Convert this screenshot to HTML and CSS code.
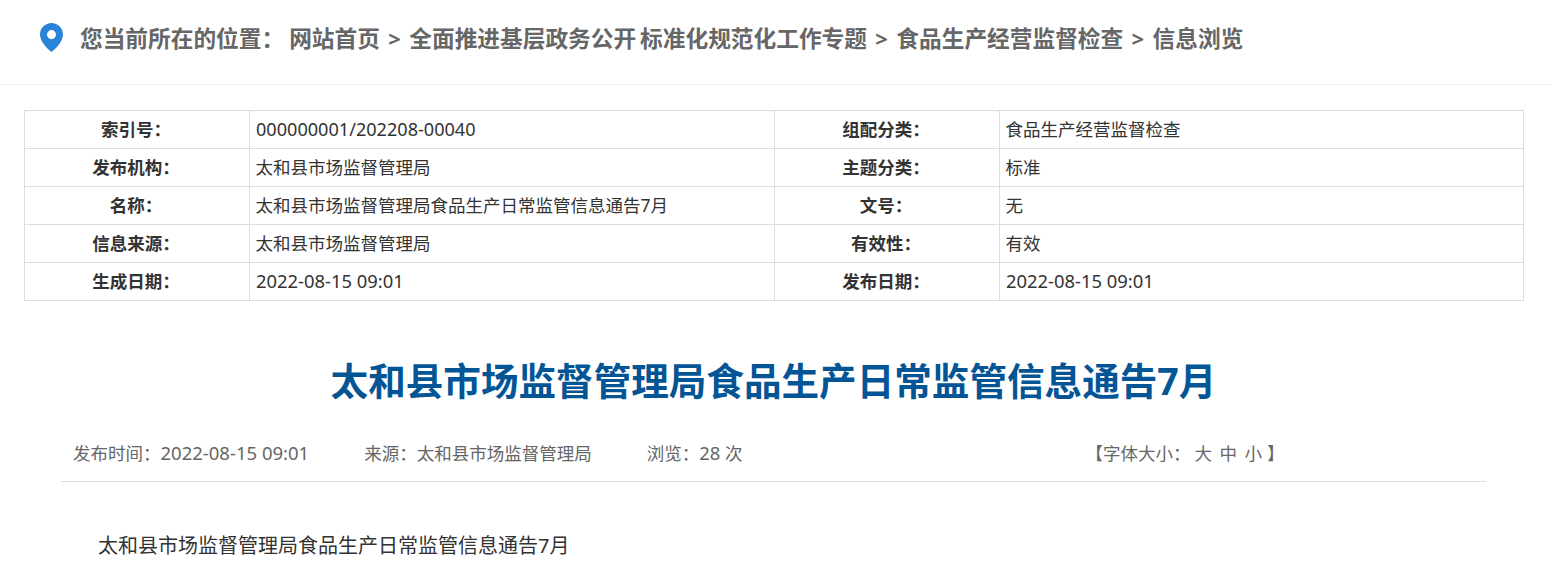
FILE: index.html
```html
<!DOCTYPE html>
<html lang="zh-CN">
<head>
<meta charset="utf-8">
<title>信息浏览</title>
<link rel="stylesheet" href="styles.css">
</head>
<body>
<header class="crumbs">
  <svg class="pin" viewBox="0 0 24 30" width="23" height="29" preserveAspectRatio="none" aria-hidden="true"><path fill="#2a83d6" fill-rule="evenodd" d="M12 0C5.4 0 0 5.3 0 11.900c0 3.300 1.600 6.500 3.500 9.400C5.600 24.400 8.600 27.400 12 30c3.400-2.600 6.400-5.600 8.500-8.700 1.900-2.900 3.500-6.100 3.500-9.400C24 5.300 18.600 0 12 0zm0 7.300a4.700 4.700 0 1 1 0 9.400 4.700 4.700 0 0 1 0-9.400z"/></svg>
  <span class="crumb-label">您当前所在的位置：</span>
  <a class="crumb">网站首页</a><span class="sep">&gt;</span>
  <a class="crumb">全面推进基层政务公开 标准化规范化工作专题</a><span class="sep">&gt;</span>
  <a class="crumb">食品生产经营监督检查</a><span class="sep">&gt;</span>
  <a class="crumb">信息浏览</a>
</header>
<main class="page">
  <table class="meta-table">
    <colgroup><col class="c-k"><col class="c-v"><col class="c-k"><col class="c-last"></colgroup>
    <tr><th>索引号：</th><td><span class="num-id">000000001/202208-00040</span></td><th>组配分类：</th><td>食品生产经营监督检查</td></tr>
    <tr><th>发布机构：</th><td>太和县市场监督管理局</td><th>主题分类：</th><td>标准</td></tr>
    <tr><th>名称：</th><td>太和县市场监督管理局食品生产日常监管信息通告7月</td><th>文号：</th><td>无</td></tr>
    <tr><th>信息来源：</th><td>太和县市场监督管理局</td><th>有效性：</th><td>有效</td></tr>
    <tr><th>生成日期：</th><td><span class="num">2022-08-15 09:01</span></td><th>发布日期：</th><td><span class="num">2022-08-15 09:01</span></td></tr>
  </table>
  <article class="article">
    <h1 class="title">太和县市场监督管理局食品生产日常监管信息通告7月</h1>
    <div class="info">
      <span class="info-item">发布时间：<span class="num-lg">2022-08-15 09:01</span></span>
      <span class="info-item">来源：太和县市场监督管理局</span>
      <span class="info-item">浏览：<span class="num-lg">28</span> 次</span>
      <span class="fontsize">【字体大小：<a class="fs-first">大</a><a class="fs-opt">中</a><a class="fs-opt">小</a><span class="fs-end">】</span></span>
    </div>
    <p class="body">太和县市场监督管理局食品生产日常监管信息通告7月</p>
  </article>
</main>
</body>
</html>
```
FILE: styles.css
```css
* { box-sizing: border-box; }
html, body { margin: 0; padding: 0; background: #fff; overflow: hidden; }
body { font-family: "Noto Sans", "Noto Sans CJK SC", sans-serif; height: 571px; }
.crumbs {
  height: 85px;
  border-bottom: 1px solid #e9eef6;
  padding: 0 0 9px 40px;
  display: flex;
  align-items: center;
  font-size: 22.7px;
  font-weight: 700;
  color: #666;
  white-space: pre;
  word-spacing: -2px;
}
.pin { margin-right: 17px; flex: none; }
.crumb-label { margin-right: 5px; }
.sep { margin: 0 8.400px; font-size: 22px; }
.page { padding: 25px 29px 0 24px; }
.meta-table {
  width: 1499px;
  border-collapse: collapse;
  table-layout: fixed;
  font-size: 17.5px;
  color: #333;
}
.c-k { width: 225px; }
.c-v { width: 525px; }
.c-last { width: 524px; }
.meta-table th, .meta-table td {
  height: 38px;
  padding: 0 0 2px;
  border: 1px solid #ddd;
  font-weight: 400;
  white-space: nowrap;
}
.meta-table th { font-weight: 700; text-align: center; padding-right: 2px; }
.meta-table td { padding-left: 5.500px; }
.num { font-size: 18.400px; margin-left: 0.500px; }
.num-id { font-size: 18.100px; margin-left: 0.500px; }
.num-lg { font-size: 18.500px; }
.article { padding: 0 37px 0 37px; }
.title {
  margin: 53px 0 0;
  height: 54px;
  line-height: 54px;
  font-size: 37.600px;
  font-weight: 700;
  text-align: center;
  color: #045596;
}
.info {
  display: flex;
  margin-top: 23px;
  height: 51px;
  padding: 0 0 8px 12px;
  align-items: center;
  border-bottom: 1px solid #ddd;
  font-size: 17.5px;
  color: #666;
  white-space: pre;
}
.info-item { margin-right: 55px; }
.fontsize { margin-left: 288px; display: flex; }
.fs-first { margin-left: 4px; }
.fs-opt { margin-left: 7.500px; }
.fs-end { margin-left: 5px; }
.body {
  margin: 47px 0 0;
  padding-left: 37px;
  font-size: 20px;
  line-height: 34px;
  color: #333;
}
```
